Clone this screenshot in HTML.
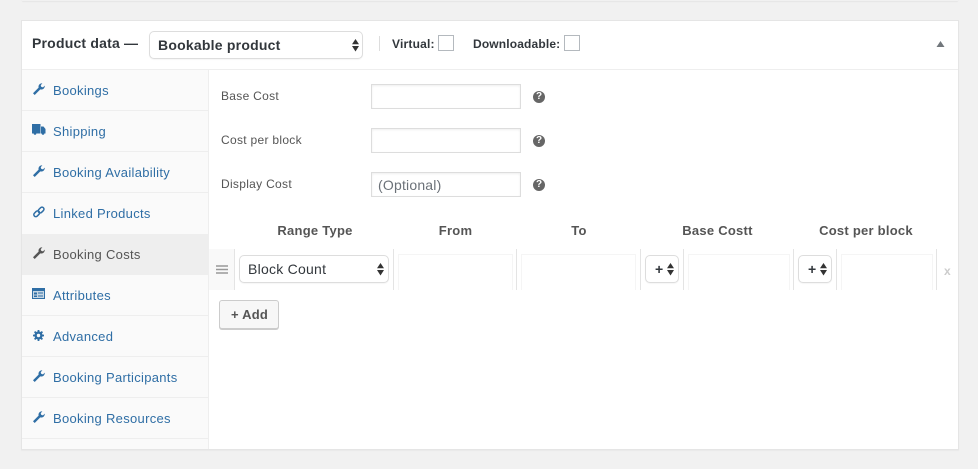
<!DOCTYPE html>
<html><head><meta charset="utf-8"><style>
html,body{margin:0;padding:0}
body{width:978px;height:469px;background:#f1f1f1;position:relative;overflow:hidden;font-family:"Liberation Sans",sans-serif;color:#555}
.a{position:absolute;white-space:nowrap;line-height:16px}
.l{font-size:13px;letter-spacing:.3px;color:#2f6ea5;left:53px}
.f{font-size:12px;letter-spacing:.3px;left:221px;color:#555}
.h{font-size:13px;font-weight:bold;letter-spacing:.25px;color:#555;text-align:center}
.b{position:absolute;box-sizing:border-box}
.line{position:absolute;background:#eee}
.in{position:absolute;box-sizing:border-box;left:371px;width:150px;height:25px;border:1px solid #ddd;box-shadow:inset 0 1px 2px rgba(0,0,0,.07);background:#fff}
.sel{position:absolute;box-sizing:border-box;background:#fff;border:1px solid #ddd;border-radius:5px;box-shadow:0 1px 1px rgba(0,0,0,.04)}
.v{position:absolute;top:249px;width:1px;height:41px;background:#e4e4e4}
.cell{position:absolute;top:254px;height:36px;box-sizing:border-box;border:1px solid #f5f5f5;border-bottom:0}
.q{left:533px;width:12px;height:12px;border-radius:50%;background:#666;color:#fff;font-size:10px;font-weight:bold;line-height:12px;text-align:center}
svg{position:absolute;overflow:visible}
</style></head><body>
<div class="b" style="left:22px;top:-20px;width:936px;height:21px;background:#f1f1f1;box-shadow:0 1px 1px rgba(0,0,0,.05)"></div>
<div class="b" style="left:21px;top:20px;width:938px;height:430px;background:#fff;border:1px solid #e5e5e5;box-shadow:0 1px 1px rgba(0,0,0,.04)"></div>
<div class="b" style="left:22px;top:70px;width:186px;height:379px;background:#fafafa"></div>
<div class="line" style="left:22px;top:69px;width:936px;height:1px"></div>
<div class="line" style="left:208px;top:70px;width:1px;height:379px"></div>
<div class="line" style="left:22px;top:110px;width:186px;height:1px"></div>
<div class="line" style="left:22px;top:151px;width:186px;height:1px"></div>
<div class="line" style="left:22px;top:192px;width:186px;height:1px"></div>
<div class="b" style="left:22px;top:234px;width:186px;height:41px;background:#eee"></div>
<div class="line" style="left:22px;top:315px;width:186px;height:1px"></div>
<div class="line" style="left:22px;top:356px;width:186px;height:1px"></div>
<div class="line" style="left:22px;top:397px;width:186px;height:1px"></div>
<div class="line" style="left:22px;top:438px;width:186px;height:1px"></div>

<div class="a" style="left:32px;top:35px;font-size:14px;font-weight:bold;letter-spacing:.2px;color:#32373c">Product data —</div>
<div class="sel" style="left:149px;top:31px;width:214px;height:28px"></div>
<div class="a" style="left:158px;top:37px;font-size:14px;font-weight:bold;letter-spacing:.22px;color:#32373c">Bookable product</div>
<svg style="left:352px;top:39px" width="7" height="13"><path d="M3.500 0L7 5.200H0zM3.500 12.500L0 7H7z" fill="#333"/></svg>
<div class="line" style="left:379px;top:36px;width:1px;height:15px;background:#ddd"></div>
<div class="a" style="left:392px;top:36px;font-size:12px;font-weight:bold;letter-spacing:.2px;color:#32373c">Virtual:</div>
<div class="b" style="left:438px;top:35px;width:16px;height:16px;border:1px solid #b4b9be;background:#fff"></div>
<div class="a" style="left:473px;top:36px;font-size:12px;font-weight:bold;letter-spacing:.15px;color:#32373c">Downloadable:</div>
<div class="b" style="left:564px;top:35px;width:16px;height:16px;border:1px solid #b4b9be;background:#fff"></div>
<svg style="left:937px;top:41px" width="7" height="6"><path d="M3.500 0L7.500 6H-.5z" fill="#72777c"/></svg>

<svg style="left:33px;top:83px" width="12" height="12" viewBox="0 0 12 12"><path d="M0 10.200L5.600 4.600C5.100 2.500 6.600.3 9.400.3L7.700 2.200 8.300 3.900 10 4.400 11.800 2.600C11.900 5.400 9.500 7.100 7.300 6.400L1.700 12z" fill="#2f6ea5"/></svg>
<div class="a l" style="top:83px">Bookings</div>
<svg style="left:32px;top:124px" width="14" height="11" viewBox="0 0 14 11"><path d="M0 0H8.500V9.500H0zM9 2.500H11.500L13.500 5V9.500H9z" fill="#2f6ea5"/><circle cx="3" cy="9.500" r="1.300" fill="#2f6ea5"/><circle cx="11" cy="9.500" r="1.300" fill="#2f6ea5"/></svg>
<div class="a l" style="top:124px">Shipping</div>
<svg style="left:33px;top:165px" width="12" height="12" viewBox="0 0 12 12"><path d="M0 10.200L5.600 4.600C5.100 2.500 6.600.3 9.400.3L7.700 2.200 8.300 3.900 10 4.400 11.800 2.600C11.900 5.400 9.500 7.100 7.300 6.400L1.700 12z" fill="#2f6ea5"/></svg>
<div class="a l" style="top:165px">Booking Availability</div>
<svg style="left:33px;top:206px" width="12" height="12" viewBox="0 0 12 12"><g fill="none" stroke="#2f6ea5" stroke-width="1.500"><rect x="6" y=".9" width="4" height="6.500" rx="2" transform="rotate(45 8.200 4.200)"/><rect x="1.700" y="4.600" width="4" height="6.500" rx="2" transform="rotate(45 3.800 7.800)"/></g></svg>
<div class="a l" style="top:206px">Linked Products</div>
<svg style="left:33px;top:247px" width="12" height="12" viewBox="0 0 12 12"><path d="M0 10.200L5.600 4.600C5.100 2.500 6.600.3 9.400.3L7.700 2.200 8.300 3.900 10 4.400 11.800 2.600C11.900 5.400 9.500 7.100 7.300 6.400L1.700 12z" fill="#555"/></svg>
<div class="a l" style="top:247px;color:#555">Booking Costs</div>
<svg style="left:32px;top:288px" width="13" height="11" viewBox="0 0 13 11"><path fill-rule="evenodd" d="M0 0H13V11H0zM1 3V10H12V3zM2 4.500H5V6.500H2zM6 4.500H11V5.500H6zM2 7.500H5V9H2zM6 7.500H11V8.500H6z" fill="#2f6ea5"/><path d="M1 3H12V10H1z" fill="#2f6ea5" opacity=".25"/></svg>
<div class="a l" style="top:288px">Attributes</div>
<svg style="left:33px;top:330px" width="11" height="11" viewBox="0 0 11 11"><circle cx="5.500" cy="5.500" r="2.900" fill="none" stroke="#2f6ea5" stroke-width="2.400"/><path d="M5.500 0V11M0 5.500H11M1.600 1.600L9.400 9.400M9.400 1.600L1.600 9.400" stroke="#2f6ea5" stroke-width="1.800" stroke-dasharray="2 7 2"/></svg>
<div class="a l" style="top:329px">Advanced</div>
<svg style="left:33px;top:370px" width="12" height="12" viewBox="0 0 12 12"><path d="M0 10.200L5.600 4.600C5.100 2.500 6.600.3 9.400.3L7.700 2.200 8.300 3.900 10 4.400 11.800 2.600C11.900 5.400 9.500 7.100 7.300 6.400L1.700 12z" fill="#2f6ea5"/></svg>
<div class="a l" style="top:370px">Booking Participants</div>
<svg style="left:33px;top:411px" width="12" height="12" viewBox="0 0 12 12"><path d="M0 10.200L5.600 4.600C5.100 2.500 6.600.3 9.400.3L7.700 2.200 8.300 3.900 10 4.400 11.800 2.600C11.900 5.400 9.500 7.100 7.300 6.400L1.700 12z" fill="#2f6ea5"/></svg>
<div class="a l" style="top:411px">Booking Resources</div>

<div class="a f" style="top:88px">Base Cost</div>
<div class="in" style="top:84px"></div>
<div class="a f" style="top:132px">Cost per block</div>
<div class="in" style="top:128px"></div>
<div class="a f" style="top:176px">Display Cost</div>
<div class="in" style="top:172px"></div>
<div class="a" style="left:378px;top:177px;font-size:14px;letter-spacing:.2px;color:#6b7178">(Optional)</div>
<div class="a q" style="top:91px">?</div>
<div class="a q" style="top:135px">?</div>
<div class="a q" style="top:179px">?</div>

<div class="a h" style="left:236px;width:158px;top:223px">Range Type</div>
<div class="a h" style="left:394px;width:123px;top:223px">From</div>
<div class="a h" style="left:517px;width:124px;top:223px">To</div>
<div class="a h" style="left:641px;width:153px;top:223px">Base Costt</div>
<div class="a h" style="left:794px;width:144px;top:223px">Cost per block</div>

<div class="b" style="left:209px;top:249px;width:25px;height:41px;background:#f9f9f9"></div>
<svg style="left:216px;top:265px" width="12" height="9"><path d="M0 1H12M0 4.500H12M0 8H12" stroke="#999" stroke-width="1.400"/></svg>
<div class="v" style="left:234px"></div>
<div class="sel" style="left:239px;top:255px;width:150px;height:28px"></div>
<div class="a" style="left:248px;top:261px;font-size:14px;letter-spacing:.25px;color:#32373c">Block Count</div>
<svg style="left:377px;top:263px" width="7" height="13"><path d="M3.500 0L7 5.200H0zM3.500 12.500L0 7H7z" fill="#333"/></svg>
<div class="v" style="left:393px"></div>
<div class="cell" style="left:398px;width:115px"></div>
<div class="v" style="left:516px"></div>
<div class="cell" style="left:521px;width:115px"></div>
<div class="v" style="left:640px"></div>
<div class="sel" style="left:645px;top:255px;width:34px;height:28px"></div>
<div class="a" style="left:655px;top:261px;font-size:14px;font-weight:bold;color:#32373c">+</div>
<svg style="left:667px;top:263px" width="7" height="13"><path d="M3.500 0L7 5.200H0zM3.500 12.500L0 7H7z" fill="#333"/></svg>
<div class="v" style="left:683px"></div>
<div class="cell" style="left:688px;width:102px"></div>
<div class="v" style="left:793px"></div>
<div class="sel" style="left:798px;top:255px;width:34px;height:28px"></div>
<div class="a" style="left:808px;top:261px;font-size:14px;font-weight:bold;color:#32373c">+</div>
<svg style="left:820px;top:263px" width="7" height="13"><path d="M3.500 0L7 5.200H0zM3.500 12.500L0 7H7z" fill="#333"/></svg>
<div class="v" style="left:836px"></div>
<div class="cell" style="left:841px;width:92px"></div>
<div class="v" style="left:936px"></div>
<div class="a" style="left:944px;top:263px;font-size:12px;color:#ccc;font-weight:bold">x</div>

<div class="b" style="left:219px;top:300px;width:60px;height:29px;background:#f7f7f7;border:1px solid #ccc;border-radius:3px;box-shadow:0 1px 0 #ccc"></div>
<div class="a" style="left:219.500px;width:60px;text-align:center;top:307px;font-size:13px;font-weight:bold;letter-spacing:.2px;color:#555">+ Add</div>
</body></html>
